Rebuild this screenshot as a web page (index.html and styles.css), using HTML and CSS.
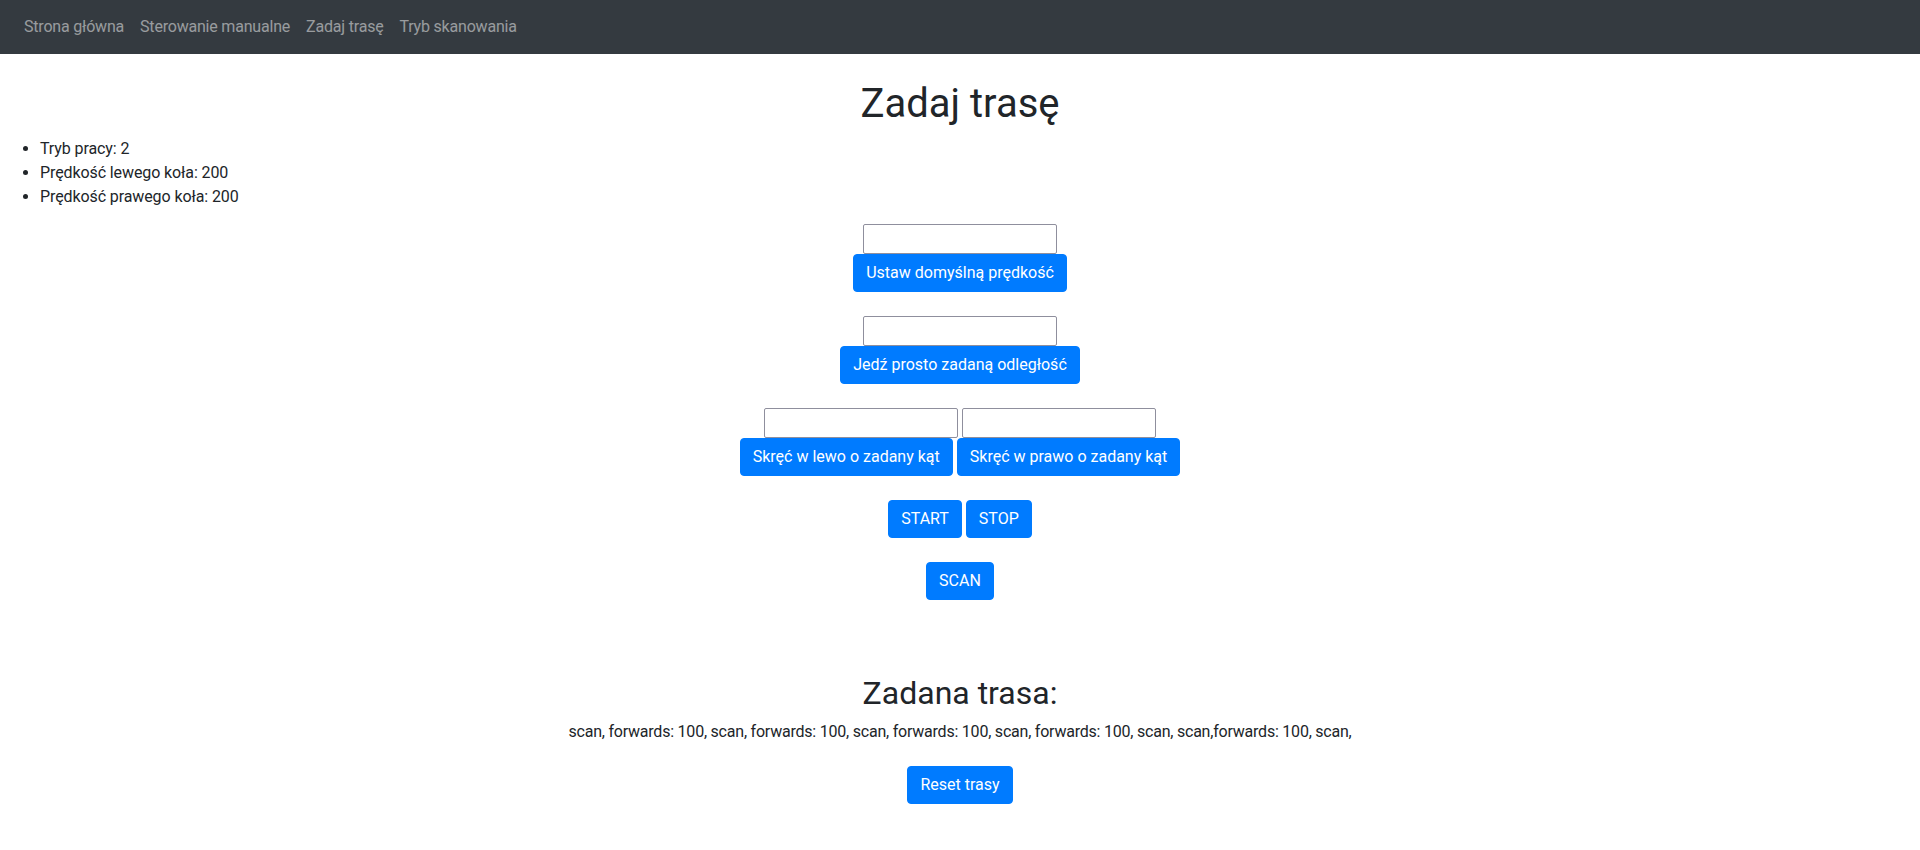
FILE: index.html
```html
<!DOCTYPE html>
<html lang="pl">
<head>
<meta charset="utf-8">
<title>Zadaj trasę</title>
<link rel="stylesheet" href="styles.css">
</head>
<body>
<nav class="navbar">
  <ul class="nav-list">
    <li><a class="nav-link" href="#">Strona główna</a></li>
    <li><a class="nav-link" href="#">Sterowanie manualne</a></li>
    <li><a class="nav-link" href="#">Zadaj trasę</a></li>
    <li><a class="nav-link" href="#">Tryb skanowania</a></li>
  </ul>
</nav>
<main class="page">
  <h1 class="title">Zadaj trasę</h1>
  <ul class="status">
    <li>Tryb pracy: 2</li>
    <li>Prędkość lewego koła: 200</li>
    <li>Prędkość prawego koła: 200</li>
  </ul>
  <div class="controls">
    <div class="group">
      <div class="row"><input class="field" type="text"></div>
      <div class="row"><button class="btn">Ustaw domyślną prędkość</button></div>
    </div>
    <div class="group">
      <div class="row"><input class="field" type="text"></div>
      <div class="row"><button class="btn">Jedź prosto zadaną odległość</button></div>
    </div>
    <div class="group">
      <div class="row"><input class="field" type="text"><input class="field" type="text"></div>
      <div class="row"><button class="btn">Skręć w lewo o zadany kąt</button><button class="btn">Skręć w prawo o zadany kąt</button></div>
    </div>
    <div class="group">
      <div class="row"><button class="btn">START</button><button class="btn">STOP</button></div>
    </div>
    <div class="group">
      <div class="row"><button class="btn">SCAN</button></div>
    </div>
  </div>
  <section class="route">
    <h2 class="route-title">Zadana trasa:</h2>
    <p class="route-text">scan, forwards: 100, scan, forwards: 100, scan, forwards: 100, scan, forwards: 100, scan, scan,forwards: 100, scan,</p>
    <button class="btn">Reset trasy</button>
  </section>
</main>
</body>
</html>
```
FILE: styles.css
```css
* { box-sizing: border-box; }
html, body { margin: 0; padding: 0; }
body {
  font-family: Roboto, "Liberation Sans", sans-serif;
  font-size: 16px;
  line-height: 1.5;
  color: #212529;
  background: #fff;
}
.navbar {
  background: #343a40;
  height: 54px;
  display: flex;
  align-items: center;
  padding: 0 16px;
}
.nav-list {
  list-style: none;
  margin: 0;
  padding: 0;
  display: flex;
}
.nav-link {
  display: block;
  padding: 8px;
  color: rgba(255, 255, 255, 0.5);
  text-decoration: none;
  letter-spacing: -0.2px;
}
.page { display: flex; flex-direction: column; }
.title {
  margin: 26px 0 9px;
  font-size: 40px;
  font-weight: 400;
  line-height: 1.2;
  text-align: center;
}
.status {
  margin: 0 0 15px;
  padding-left: 40px;
  letter-spacing: -0.1px;
}
.controls {
  display: flex;
  flex-direction: column;
  gap: 24px;
}
.row {
  display: flex;
  justify-content: center;
  gap: 4px;
}
.field {
  width: 194px;
  height: 30px;
  border: 1px solid #8f8f9d;
  border-radius: 2px;
  padding: 1px 2px;
  font: inherit;
  background: #fff;
}
.btn {
  font: inherit;
  line-height: 24px;
  padding: 6px 12px;
  color: #fff;
  background: #007bff;
  border: 1px solid #007bff;
  border-radius: 4px;
  cursor: pointer;
}
.route {
  margin-top: 74px;
  display: flex;
  flex-direction: column;
  align-items: center;
}
.route-title {
  margin: 0 0 8px;
  font-size: 32px;
  font-weight: 400;
  line-height: 1.2;
}
.route-text {
  margin: 0 0 22px;
  letter-spacing: -0.22px;
}
```
